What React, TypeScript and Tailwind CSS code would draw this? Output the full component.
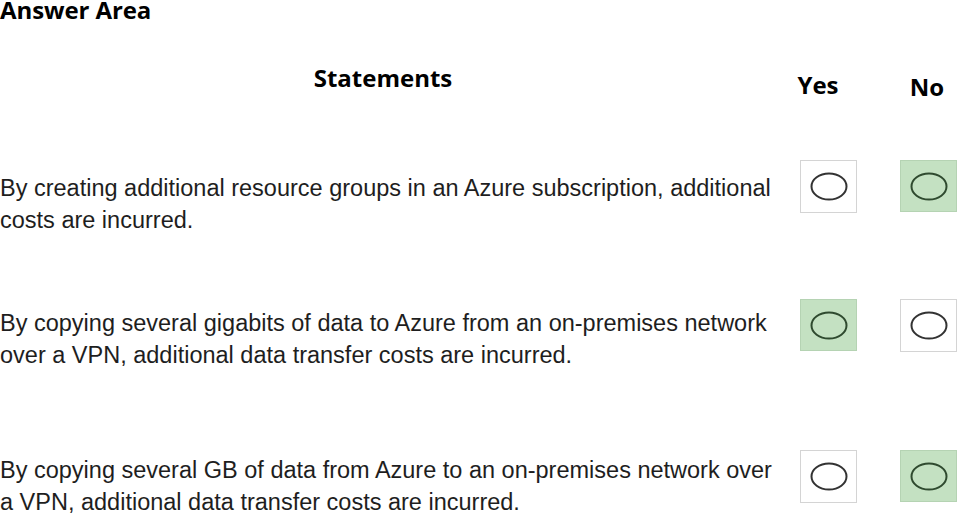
type Fila = {
  texto: string[];
  respuesta: "si" | "no";
  margen: string;
  textoMargen: string;
};

const filas: Fila[] = [
  {
    texto: [
      "By creating additional resource groups in an Azure subscription, additional",
      "costs are incurred.",
    ],
    respuesta: "no",
    margen: "mt-[57px]",
    textoMargen: "mt-[12px]",
  },
  {
    texto: [
      "By copying several gigabits of data to Azure from an on-premises network",
      "over a VPN, additional data transfer costs are incurred.",
    ],
    respuesta: "si",
    margen: "mt-[63px]",
    textoMargen: "mt-[8px]",
  },
  {
    texto: [
      "By copying several GB of data from Azure to an on-premises network over",
      "a VPN, additional data transfer costs are incurred.",
    ],
    respuesta: "no",
    margen: "mt-[79px]",
    textoMargen: "mt-[4px]",
  },
];

function Opcion({ marcada }: { marcada: boolean }) {
  return (
    <div
      className={
        marcada
          ? "w-[57px] h-[52px] bg-[#c4e1c2] border border-[#b5d3b3] flex items-center justify-center"
          : "w-[57px] h-[53px] bg-white border border-[#d4d4d4] flex items-center justify-center"
      }
    >
      <svg width="38" height="29" viewBox="0 0 38 29">
        <ellipse
          cx="19"
          cy="14.5"
          rx="17.5"
          ry="13"
          fill="none"
          stroke={marcada ? "#2f4a2f" : "#333333"}
          strokeWidth="2"
        />
      </svg>
    </div>
  );
}

export default function App() {
  return (
    <main className="w-[974px] h-[516px] bg-white overflow-hidden font-['Liberation_Sans',Arial,sans-serif] text-[#1e1e1e]">
      <h1 className="h-[23px] font-['Open_Sans',sans-serif] font-bold text-[24px] leading-[20px] tracking-[-0.1px] text-black">
        Answer Area
      </h1>

      <div className="flex items-start h-[40px] mt-[40px] font-['Open_Sans',sans-serif] font-bold text-[24px] leading-[30px] text-black">
        <div className="w-[766px] text-center">Statements</div>
        <div className="w-[104px] text-center mt-[7px]">Yes</div>
        <div className="w-[60px] text-center ml-[27px] mt-[9px]">No</div>
      </div>

      {filas.map((fila, i) => (
        <div key={i} className={`flex items-start ${fila.margen}`}>
          <div
            className={`w-[800px] text-[23.5px] leading-[32px] ${fila.textoMargen}`}
          >
            {fila.texto.map((linea) => (
              <div key={linea}>{linea}</div>
            ))}
          </div>
          <Opcion marcada={fila.respuesta === "si"} />
          <div className="ml-[43px]">
            <Opcion marcada={fila.respuesta === "no"} />
          </div>
        </div>
      ))}
    </main>
  );
}
